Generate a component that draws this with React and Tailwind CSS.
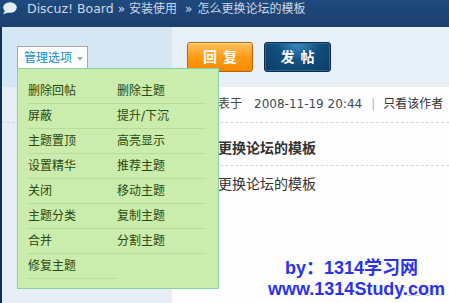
import React from "react";

const cn = '"DejaVu Sans", "Noto Sans CJK SC", sans-serif';

const menuItems = [
  "删除回帖", "删除主题",
  "屏蔽", "提升/下沉",
  "主题置顶", "高亮显示",
  "设置精华", "推荐主题",
  "关闭", "移动主题",
  "主题分类", "复制主题",
  "合并", "分割主题",
  "修复主题",
];

function Bubble() {
  return (
    <svg width="15" height="13" viewBox="0 0 15 13" className="shrink-0">
      <ellipse cx="8" cy="5.5" rx="6.8" ry="5.2" fill="#e6edf5" />
      <path d="M3 8.5 L1 12.5 L7 10 Z" fill="#e6edf5" />
    </svg>
  );
}

export default function App() {
  return (
    <div className="relative w-[449px] h-[303px] overflow-hidden bg-white" style={{ fontFamily: cn }}>
      {/* breadcrumb bar */}
      <header className="h-[27px] bg-gradient-to-b from-[#1f4a7e] to-[#1a3f6d] flex items-start pt-[2px] pl-[2px] text-[#cdd9e8] text-[12px] leading-[14px]">
        <Bubble />
        <div className="ml-[10px] flex items-center whitespace-nowrap">
          <span className="text-[12.5px]">Discuz! Board</span>
          <span className="mx-[4px]">»</span>
          <span>安装使用</span>
          <span className="ml-[8px] mr-[5px]">»</span>
          <span>怎么更换论坛的模板</span>
        </div>
      </header>

      <div className="flex border-l-2 border-[#13305a] h-[276px]">
        {/* left column */}
        <div className="w-[170px] flex flex-col">
          <div className="h-[60px] bg-[#d5e7f3] pt-[19px] pl-[15px]">
            <div className="relative w-[71px]">
              <div className="h-[22px] bg-white border border-b-0 border-[#a7a7a7] flex items-center pl-[6px] text-[12px] text-[#0b8bc8]">
                管理选项
                <span className="ml-[5px] mt-[2px] w-0 h-0 border-l-[3.5px] border-r-[3.5px] border-t-[4px] border-l-transparent border-r-transparent border-t-[#a8a8a8]" />
              </div>
              <div className="absolute left-0 top-full z-10 w-[202px] bg-[#caecad] border border-[#86d2a6] pt-[10px] pb-[9px]">
                <ul className="ml-[10px] w-[178px] grid grid-cols-2">
                  {menuItems.map((item) => (
                    <li
                      key={item}
                      className="h-[25px] leading-[24px] border-b border-[#b6dd9b] text-[12px] text-[#2b480c]"
                    >
                      {item}
                    </li>
                  ))}
                </ul>
              </div>
            </div>
          </div>
          <div className="flex-1 bg-[#e8eef7]">
            <div className="h-[36px] border-b border-dashed border-[#cfd6de]" />
          </div>
        </div>

        {/* main column */}
        <div className="flex-1 flex flex-col">
          <div className="h-[60px] bg-[#e8f0f7] flex items-center gap-[11px] pl-[15px]">
            <button className="w-[66px] h-[30px] rounded-[3px] border border-[#b8620e] bg-gradient-to-b from-[#ffc25a] via-[#ff9a10] to-[#f58a00] text-white text-[14px] font-bold tracking-[6px] pl-[6px] shadow-[inset_0_1px_0_#ffe0a0]">
              回复
            </button>
            <button className="w-[67px] h-[30px] rounded-[3px] border border-[#0b2848] bg-[radial-gradient(ellipse_at_50%_0%,#3a8cc4_0%,#13507f_45%,#0c3a62_100%)] text-white text-[14px] font-bold tracking-[6px] pl-[6px] shadow-[inset_0_0_0_1px_#2b6a9a]">
              发帖
            </button>
          </div>
          <div className="flex-1 bg-[#fdfdfd] pl-[18px]">
            <div className="h-[36px] flex items-center pb-[2px] pl-[16px] border-b border-dashed border-[#d8d8d8] text-[12px] text-[#444] whitespace-nowrap">
              <span>发表于</span>
              <span className="ml-[12px] text-[#3d4a5a]">2008-11-19 20:44</span>
              <span className="ml-[9px] mr-[8px] text-[#b3aed0]">|</span>
              <span className="text-[#333]">只看该作者</span>
            </div>
            <div className="h-[43px] pt-[17px] border-b border-dashed border-[#d8d8d8]">
              <h2 className="text-[14px] leading-[16px] font-bold text-[#333]">怎么更换论坛的模板</h2>
            </div>
            <p className="pt-[10px] text-[14px] leading-[16px] text-[#333]">怎么更换论坛的模板</p>
            <p className="mt-[92px] ml-[205px] text-[12px] leading-[14px] text-[#c4c4c4] whitespace-nowrap">本主题由</p>
          </div>
        </div>
      </div>

      {/* watermark */}
      <div
        className="absolute left-[268px] top-[258px] text-[18px] font-bold leading-[21px] text-[#2a33e8] whitespace-nowrap [text-shadow:0_0_2px_#fff,0_0_3px_#fff]"
        style={{ fontFamily: '"Liberation Sans", "Noto Sans CJK SC", sans-serif' }}
      >
        <div className="pl-[17px]">by：1314学习网</div>
        <div>www.1314Study.com</div>
      </div>
    </div>
  );
}
